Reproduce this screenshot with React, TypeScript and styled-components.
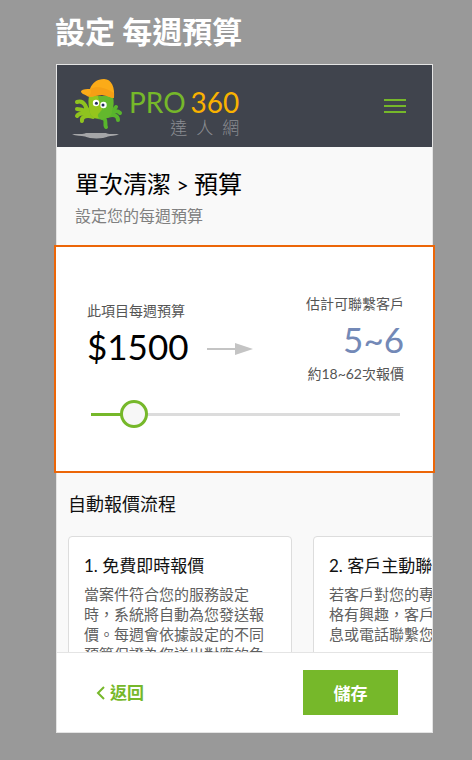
import { useState } from "react";
import styled, { createGlobalStyle } from "styled-components";

const green = "#76b82a";

const GlobalStyle = createGlobalStyle`
  *, *::before, *::after { box-sizing: border-box; }
  body {
    margin: 0;
    background: #999;
    color: #111;
    font-family: Lato, "Noto Sans CJK TC", sans-serif;
  }
  h1, h2, h3, p { margin: 0; font-weight: 400; }
`;

const Page = styled.div`
  display: flex;
  flex-direction: column;
  height: 100vh;
  padding: 11px 39px 27px 55px;
`;

const PageTitle = styled.h1`
  margin-bottom: 13px;
  color: #fff;
  font-size: 30px;
  line-height: 40px;
  && { font-weight: 700; }
`;

const Phone = styled.main`
  display: flex;
  flex: 1;
  flex-direction: column;
  min-height: 0;
  margin-left: 1px;
  border: 1px solid #e4e4e4;
  background: #f9f9f9;
`;

const Header = styled.header`
  display: flex;
  flex-shrink: 0;
  align-items: center;
  justify-content: space-between;
  height: 82px;
  padding: 0 26px 0 14px;
  background: #40444d;
`;

const Brand = styled.a`
  display: flex;
  align-items: flex-end;
  gap: 6px;
  height: 66px;
  color: ${green};
  text-decoration: none;
`;

const BrandText = styled.span`
  display: flex;
  flex-direction: column;
`;

const Wordmark = styled.span`
  display: flex;
  gap: 5px;
  font-size: 28px;
  line-height: 30px;
`;

const Accent = styled.span`
  color: #f9b200;
`;

const Tagline = styled.span`
  display: flex;
  justify-content: space-between;
  width: 69px;
  align-self: flex-end;
  color: #8b8d92;
  font-size: 17px;
  font-weight: 300;
  line-height: 22px;
`;

const MenuButton = styled.button`
  display: flex;
  flex-direction: column;
  gap: 4px;
  padding: 0;
  border: 0;
  background: none;
  cursor: pointer;
`;

const MenuBar = styled.span`
  width: 22px;
  height: 2px;
  background: ${green};
`;

const Intro = styled.section`
  flex-shrink: 0;
  padding: 20px 18px 17px;
`;

const IntroTitle = styled.h2`
  color: #000;
  font-size: 24px;
  line-height: 34px;
`;

const Separator = styled.span`
  font-size: 21px;
  line-height: 1;
`;

const IntroText = styled.p`
  margin-top: 3px;
  color: #808080;
  font-size: 16px;
  line-height: 24px;
`;

const Budget = styled.section`
  flex-shrink: 0;
  margin: 0 -3px;
  padding: 46px 29px 43px 31px;
  border: 2px solid #ec6608;
  background: #fff;
`;

const Figures = styled.div`
  display: flex;
  align-items: center;
  justify-content: space-between;
`;

const Spending = styled.div`
  display: flex;
  align-items: flex-end;
  gap: 18px;
  padding-bottom: 8px;
`;

const Arrow = styled.svg`
  margin-bottom: 15px;
`;

const Figure = styled.div<{ $end?: boolean }>`
  display: flex;
  flex-direction: column;
  text-align: ${(p) => (p.$end ? "right" : "left")};
`;

const Label = styled.span`
  color: #555;
  font-size: 14px;
  line-height: 22px;
`;

const Amount = styled.strong<{ $tone: string }>`
  color: ${(p) => p.$tone};
  font-size: 35px;
  font-weight: 400;
  line-height: 48px;
`;

const Slider = styled.input`
  display: block;
  width: calc(100% - 8px);
  height: 28px;
  margin: 15px 4px 0;
  appearance: none;
  background: linear-gradient(${green}, ${green}) left center / var(--filled) 3px no-repeat,
    linear-gradient(#dcdcdc, #dcdcdc) center / 100% 3px no-repeat;
  cursor: pointer;

  &::-webkit-slider-thumb {
    width: 28px;
    height: 28px;
    appearance: none;
    border: 3px solid ${green};
    border-radius: 50%;
    background: #f7f7f7;
  }
`;

const Process = styled.section`
  flex: 1;
  min-height: 0;
  overflow: hidden;
  padding: 18px 0 0 11px;
`;

const ProcessTitle = styled.h2`
  color: #111;
  font-size: 18px;
  line-height: 26px;
`;

const CardRow = styled.div`
  display: flex;
  gap: 21px;
  margin-top: 19px;
`;

const Card = styled.article`
  flex: 0 0 224px;
  padding: 16px 15px;
  border: 1px solid #ddd;
  border-radius: 4px;
  background: #fff;
`;

const CardTitle = styled.h3`
  color: #111;
  font-size: 17px;
  line-height: 26px;
`;

const CardText = styled.p`
  margin-top: 5px;
  color: #606060;
  font-size: 15px;
  line-height: 20px;
`;

const Footer = styled.footer`
  display: flex;
  flex-shrink: 0;
  align-items: center;
  justify-content: space-between;
  height: 80px;
  padding: 0 34px 0 39px;
  border-top: 1px solid #e4e4e4;
  background: #fff;
`;

const BackLink = styled.a`
  display: flex;
  align-items: center;
  gap: 5px;
  color: ${green};
  font-size: 17px;
  font-weight: 700;
  line-height: 24px;
  text-decoration: none;
`;

const SaveButton = styled.button`
  width: 95px;
  height: 45px;
  padding: 0;
  border: 0;
  background: ${green};
  color: #fff;
  font-family: inherit;
  font-size: 17px;
  font-weight: 700;
  cursor: pointer;
`;

function Octopus() {
  return (
    <svg width="52" height="62" viewBox="0 0 52 62" aria-hidden="true">
      <path d="M1 57.500C6 56 11 58 15 56h20c3 2 8 0 13 1.500-4 1.500-8 1-11 2-5 2.500-18 2.500-23 0-4-1-9-.5-13-2z" fill="#a5a6a8" />
      <g fill="none" strokeLinecap="round" strokeLinejoin="round" strokeWidth="4">
        <path d="M20 35C17 34 15 31 14 28 12 25 9 24 6 25M18 36C14 34 12 32 6 32M19 38C13 36 8 35 6 39M22 40C17 38 10 39 11 44" stroke="#8fc31f" />
        <path d="M37 36C40 36 43 33 45 30M37 38C42 34 46 33 49 36M37 39C42 37 47 38 47 43M31 41C37 42 33 47 35 50" stroke="#58b52c" />
      </g>
      <path d="M18 19c-1 7 0 12 1 17 1 5 8 7 14 6 5-1 8-3 8-8 2-5 2-9 1-15z" fill="#63b82d" />
      <path d="M18 19c-1 7 0 12 1 17 1 4 5 6 9 5-4-5 5-6 3-12-1-4-4-6-4-10z" fill="#95c51c" />
      <path d="M10 14c2-2 6-2 9-2C21 6 26 2 33 2c8 0 11 9 10 19-4 0-7-3-12-3-6 0-11 3-15 1-3-2-6-2-6-5z" fill="#fbab18" />
      <path d="M19 12c7-4 17-1 24 4v5c-4 0-7-3-12-3-6 0-11 3-15 1 3 0 5-3 3-7z" fill="#f59f15" />
      <circle cx="25" cy="26" r="3.200" fill="#fff" />
      <circle cx="32.500" cy="28" r="3.200" fill="#fff" />
      <circle cx="25.400" cy="26.200" r="1.500" fill="#222d5d" />
      <circle cx="32" cy="28" r="1.500" fill="#222d5d" />
    </svg>
  );
}

const steps = [
  {
    title: "1. 免費即時報價",
    text: "當案件符合您的服務設定時，系統將自動為您發送報價。每週會依據設定的不同預算保證為您送出對應的免費報價。",
  },
  {
    title: "2. 客戶主動聯繫",
    text: "若客戶對您的專業服務與價格有興趣，客戶會主動傳訊息或電話聯繫您。",
  },
];

const maxBudget = 14500;

export default function App() {
  const [budget, setBudget] = useState(1500);

  return (
    <>
      <GlobalStyle />
      <Page>
        <PageTitle>設定 每週預算</PageTitle>
        <Phone>
          <Header>
            <Brand href="#" aria-label="PRO360 達人網">
              <Octopus />
              <BrandText>
                <Wordmark>
                  <span>PRO</span>
                  <Accent>360</Accent>
                </Wordmark>
                <Tagline>
                  <span>達</span>
                  <span>人</span>
                  <span>網</span>
                </Tagline>
              </BrandText>
            </Brand>
            <MenuButton type="button" aria-label="選單">
              <MenuBar />
              <MenuBar />
              <MenuBar />
            </MenuButton>
          </Header>

          <Intro>
            <IntroTitle>
              單次清潔<Separator> &gt; </Separator>預算
            </IntroTitle>
            <IntroText>設定您的每週預算</IntroText>
          </Intro>

          <Budget>
            <Figures>
              <Spending>
                <Figure>
                  <Label as="label" htmlFor="budget">此項目每週預算</Label>
                  <Amount $tone="#000">${budget}</Amount>
                </Figure>
                <Arrow width="46" height="12" viewBox="0 0 46 12" aria-hidden="true">
                  <path d="M0 6h29" stroke="#c4c4c4" strokeWidth="2" />
                  <path d="M28 0l18 6-18 6z" fill="#c4c4c4" />
                </Arrow>
              </Spending>
              <Figure $end>
                <Label>估計可聯繫客戶</Label>
                <Amount $tone="#7389b7">5~6</Amount>
                <Label>約18~62次報價</Label>
              </Figure>
            </Figures>
            <Slider
              id="budget"
              type="range"
              min={0}
              max={maxBudget}
              step={100}
              value={budget}
              onChange={(e) => setBudget(Number(e.target.value))}
              style={{ "--filled": `${(budget / maxBudget) * 100}%` } as React.CSSProperties}
            />
          </Budget>

          <Process>
            <ProcessTitle>自動報價流程</ProcessTitle>
            <CardRow>
              {steps.map((step) => (
                <Card key={step.title}>
                  <CardTitle>{step.title}</CardTitle>
                  <CardText>{step.text}</CardText>
                </Card>
              ))}
            </CardRow>
          </Process>

          <Footer>
            <BackLink href="#">
              <svg width="9" height="14" viewBox="0 0 9 14" aria-hidden="true">
                <path d="M8 1L2 7l6 6" fill="none" stroke="currentColor" strokeWidth="2" />
              </svg>
              返回
            </BackLink>
            <SaveButton type="button">儲存</SaveButton>
          </Footer>
        </Phone>
      </Page>
    </>
  );
}
